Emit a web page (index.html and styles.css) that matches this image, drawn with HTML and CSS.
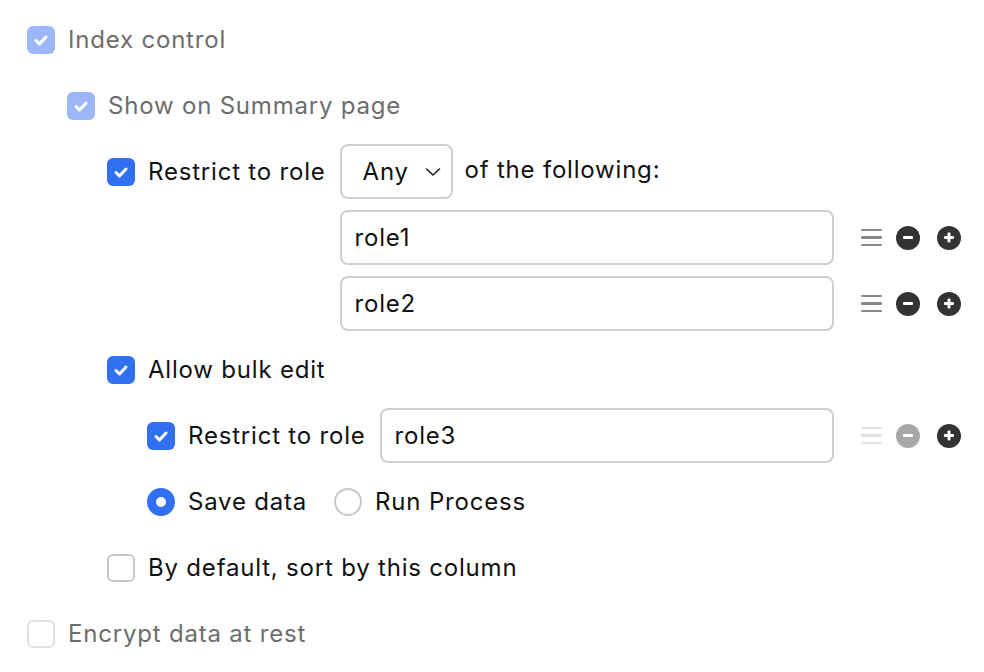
FILE: index.html
```html
<!DOCTYPE html>
<html>
<head>
<meta charset="utf-8">
<link rel="stylesheet" href="styles.css">
</head>
<body>
<div class="tree">
  <div class="row">
    <span class="cb cb-on cb-dim"><svg viewBox="0 0 28 28"><path d="M9 14.5l3.5 3.5 6.5-7"/></svg></span>
    <span class="label dim">Index control</span>
  </div>
  <div class="row l1">
    <span class="cb cb-on cb-dim"><svg viewBox="0 0 28 28"><path d="M9 14.5l3.5 3.5 6.5-7"/></svg></span>
    <span class="label dim">Show on Summary page</span>
  </div>
  <div class="grid l2">
    <div class="row">
      <span class="cb cb-on"><svg viewBox="0 0 28 28"><path d="M9 14.5l3.5 3.5 6.5-7"/></svg></span>
      <span class="label">Restrict to role</span>
    </div>
    <div class="row">
      <div class="select"><span>Any</span><svg viewBox="0 0 16 10"><path d="M1.5 2l6.5 6 6.5-6"/></svg></div>
      <span class="label follow">of the following:</span>
    </div>
    <div></div>
    <div class="row">
      <div class="input">role1</div>
      <div class="tools">
        <span class="drag"><i></i><i></i><i></i></span>
        <span class="circ minus"></span>
        <span class="circ plus"></span>
      </div>
    </div>
    <div></div>
    <div class="row">
      <div class="input">role2</div>
      <div class="tools">
        <span class="drag"><i></i><i></i><i></i></span>
        <span class="circ minus"></span>
        <span class="circ plus"></span>
      </div>
    </div>
  </div>
  <div class="row l2">
    <span class="cb cb-on"><svg viewBox="0 0 28 28"><path d="M9 14.5l3.5 3.5 6.5-7"/></svg></span>
    <span class="label">Allow bulk edit</span>
  </div>
  <div class="grid l3">
    <div class="row">
      <span class="cb cb-on"><svg viewBox="0 0 28 28"><path d="M9 14.5l3.5 3.5 6.5-7"/></svg></span>
      <span class="label">Restrict to role</span>
    </div>
    <div class="row">
      <div class="input">role3</div>
      <div class="tools">
        <span class="drag faded"><i></i><i></i><i></i></span>
        <span class="circ minus faded"></span>
        <span class="circ plus"></span>
      </div>
    </div>
  </div>
  <div class="row l3">
    <span class="radio radio-on"></span>
    <span class="label">Save data</span>
    <span class="radio second"></span>
    <span class="label">Run Process</span>
  </div>
  <div class="row l2">
    <span class="cb"></span>
    <span class="label">By default, sort by this column</span>
  </div>
  <div class="row">
    <span class="cb cb-light"></span>
    <span class="label dim">Encrypt data at rest</span>
  </div>
</div>
</body>
</html>
```
FILE: styles.css
```css
* { box-sizing: border-box; }
html, body { margin: 0; padding: 0; background: #fff; }
body {
  font-family: Inter, "Noto Sans", sans-serif;
  font-size: 24px;
  letter-spacing: 0.8px;
  color: #111;
}
.tree {
  display: flex;
  flex-direction: column;
  gap: 11px;
  padding: 12px 23px 0 27px;
}
.row {
  display: flex;
  align-items: center;
  height: 55px;
}
.l1 { margin-left: 40px; }
.l2 { margin-left: 80px; }
.l3 { margin-left: 120px; }
.grid {
  display: grid;
  grid-template-columns: auto 1fr;
  column-gap: 14px;
  row-gap: 11px;
}
.cb {
  width: 28px;
  height: 28px;
  border-radius: 6px;
  border: 2px solid #c9c9c9;
  flex: none;
  display: flex;
}
.cb svg { width: 100%; height: 100%; }
.cb path { fill: none; stroke: #fff; stroke-width: 3; stroke-linecap: round; stroke-linejoin: round; }
.cb-on { background: #3170f2; border: none; }
.cb-dim { background: #9cb7f7; }
.cb-light { border-color: #e0e0e0; }
.label { margin-left: 13px; white-space: nowrap; }
.dim { color: #6d6d6d; }
.select {
  width: 113px;
  height: 55px;
  border: 2px solid #cfcfcf;
  border-radius: 8px;
  display: flex;
  align-items: center;
  justify-content: space-between;
  padding: 0 10px 0 21px;
}
.select svg { width: 16px; height: 10px; }
.select path { fill: none; stroke: #222; stroke-width: 1.6; stroke-linecap: round; stroke-linejoin: round; }
.follow { margin-left: 12px; margin-top: -4px; }
.input {
  flex: 1;
  height: 55px;
  border: 2px solid #cfcfcf;
  border-radius: 8px;
  display: flex;
  align-items: center;
  padding-left: 13px;
}
.tools {
  display: flex;
  align-items: center;
  margin-left: 27px;
  gap: 14px;
}
.drag {
  width: 21px;
  display: flex;
  flex-direction: column;
  gap: 5px;
}
.drag i { display: block; height: 2.5px; background: #888; border-radius: 1px; }
.drag.faded i { background: #e2e2e2; }
.circ {
  width: 24px;
  height: 24px;
  border-radius: 50%;
  background: #333;
  position: relative;
}
.circ.plus { margin-left: 3px; }
.circ.faded { background: #a8a8a8; }
.circ::before, .plus::after {
  content: "";
  position: absolute;
  left: 7px;
  top: 10.5px;
  width: 10px;
  height: 3px;
  background: #fff;
  border-radius: 1px;
}
.plus::after { transform: rotate(90deg); }
.radio {
  width: 28px;
  height: 28px;
  border-radius: 50%;
  border: 2px solid #c9c9c9;
  flex: none;
}
.radio-on { border: 9px solid #3170f2; background: #fff; }
.radio.second { margin-left: 27px; }
```
